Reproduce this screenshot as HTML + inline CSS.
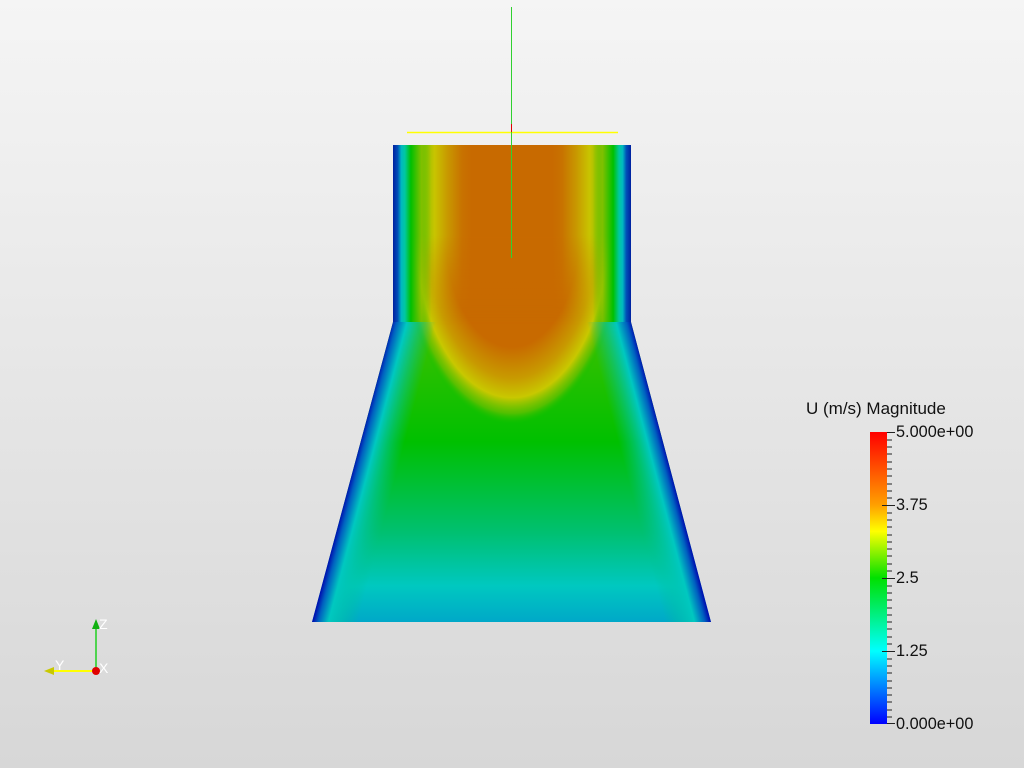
<!DOCTYPE html>
<html><head><style>
html,body{margin:0;padding:0;width:1024px;height:768px;overflow:hidden}
body{background:linear-gradient(#f5f5f5,#d7d7d7)}
svg{position:absolute;left:0;top:0}
text{font-family:"Liberation Sans","DejaVu Sans",sans-serif;fill:#111}
</style></head><body>
<svg width="1024" height="768" viewBox="0 0 1024 768">
<defs>
<clipPath id="shape"><polygon points="393,145 631,145 631,322 711,622 312,622 393,322"/></clipPath>
<linearGradient id="base" x1="0" y1="322" x2="0" y2="622" gradientUnits="userSpaceOnUse">
<stop offset="0" stop-color="#40c000"/><stop offset="0.4" stop-color="#00c000"/>
<stop offset="0.7" stop-color="#00c070"/><stop offset="0.88" stop-color="#00c8c0"/>
<stop offset="1" stop-color="#00a8c8"/></linearGradient>
<radialGradient id="core">
<stop offset="0" stop-color="#c86a00"/><stop offset="0.6" stop-color="#c86a00"/>
<stop offset="0.76" stop-color="#c89a00"/><stop offset="0.86" stop-color="#c8c800"/>
<stop offset="0.94" stop-color="#80c000" stop-opacity="0.6"/><stop offset="1" stop-color="#00c000" stop-opacity="0"/></radialGradient>
<linearGradient id="full" x1="393" y1="0" x2="631" y2="0" gradientUnits="userSpaceOnUse">
<stop offset="0" stop-color="#0020a0"/><stop offset="0.02" stop-color="#0050b8"/>
<stop offset="0.035" stop-color="#00b8c0"/><stop offset="0.05" stop-color="#00c8a0"/>
<stop offset="0.075" stop-color="#00c000"/><stop offset="0.12" stop-color="#80c000"/>
<stop offset="0.175" stop-color="#c8c400"/><stop offset="0.23" stop-color="#c89800"/>
<stop offset="0.29" stop-color="#c87200"/><stop offset="0.33" stop-color="#c86a00"/>
<stop offset="0.67" stop-color="#c86a00"/><stop offset="0.71" stop-color="#c87200"/>
<stop offset="0.77" stop-color="#c89800"/><stop offset="0.825" stop-color="#c8c400"/>
<stop offset="0.88" stop-color="#80c000"/><stop offset="0.925" stop-color="#00c000"/>
<stop offset="0.95" stop-color="#00c8a0"/><stop offset="0.965" stop-color="#00b8c0"/>
<stop offset="0.98" stop-color="#0050b8"/><stop offset="1" stop-color="#0020a0"/></linearGradient>
<linearGradient id="edges" x1="393" y1="0" x2="631" y2="0" gradientUnits="userSpaceOnUse">
<stop offset="0" stop-color="#0020a0"/><stop offset="0.02" stop-color="#0050b8"/>
<stop offset="0.035" stop-color="#00b8c0"/><stop offset="0.05" stop-color="#00c8a0"/>
<stop offset="0.075" stop-color="#00c000"/><stop offset="0.12" stop-color="#80c000" stop-opacity="0.5"/>
<stop offset="0.16" stop-color="#00c000" stop-opacity="0"/>
<stop offset="0.84" stop-color="#00c000" stop-opacity="0"/>
<stop offset="0.88" stop-color="#80c000" stop-opacity="0.5"/><stop offset="0.925" stop-color="#00c000"/>
<stop offset="0.95" stop-color="#00c8a0"/><stop offset="0.965" stop-color="#00b8c0"/>
<stop offset="0.98" stop-color="#0050b8"/><stop offset="1" stop-color="#0020a0"/></linearGradient>
<linearGradient id="fade" x1="0" y1="235" x2="0" y2="325" gradientUnits="userSpaceOnUse">
<stop offset="0" stop-color="#fff"/><stop offset="1" stop-color="#fff" stop-opacity="0"/></linearGradient>
<mask id="fm"><rect x="380" y="140" width="260" height="200" fill="url(#fade)"/></mask>
<linearGradient id="le" x1="352" y1="472" x2="394" y2="483" gradientUnits="userSpaceOnUse">
<stop offset="0" stop-color="#0010b0"/><stop offset="0.12" stop-color="#0060c0"/>
<stop offset="0.35" stop-color="#00c8c0"/><stop offset="1" stop-color="#00c090" stop-opacity="0"/></linearGradient>
<linearGradient id="re" x1="671" y1="472" x2="629" y2="483" gradientUnits="userSpaceOnUse">
<stop offset="0" stop-color="#0010b0"/><stop offset="0.12" stop-color="#0060c0"/>
<stop offset="0.35" stop-color="#00c8c0"/><stop offset="1" stop-color="#00c090" stop-opacity="0"/></linearGradient>
<linearGradient id="cb" x1="0" y1="432" x2="0" y2="724" gradientUnits="userSpaceOnUse">
<stop offset="0" stop-color="#ff0000"/><stop offset="0.25" stop-color="#ffa000"/>
<stop offset="0.34" stop-color="#ffff00"/><stop offset="0.5" stop-color="#00e000"/>
<stop offset="0.75" stop-color="#00ffff"/><stop offset="1" stop-color="#0000ff"/></linearGradient>
</defs>
<g clip-path="url(#shape)">
<rect x="300" y="140" width="420" height="490" fill="url(#base)"/>
<ellipse cx="512" cy="230" rx="112" ry="195" fill="url(#core)"/>
<rect x="300" y="322" width="420" height="310" fill="url(#le)"/>
<rect x="300" y="322" width="420" height="310" fill="url(#re)"/>
<rect x="393" y="145" width="238" height="180" fill="url(#full)" mask="url(#fm)"/>
<rect x="393" y="145" width="238" height="177" fill="url(#edges)"/>
</g>
<line x1="407" y1="132.5" x2="618" y2="132.5" stroke="#ffff00" stroke-width="1.5"/>
<line x1="511.5" y1="7" x2="511.5" y2="258" stroke="#30d030" stroke-width="1"/>
<line x1="511.5" y1="124" x2="511.5" y2="132" stroke="#e00000" stroke-width="1"/>
<line x1="96" y1="670" x2="96" y2="626" stroke="#20d020" stroke-width="1.5"/>
<polygon points="96,619 92,629 100,629" fill="#10b010"/>
<text x="99" y="629" font-size="14" style="fill:#fff">Z</text>
<line x1="96" y1="671" x2="52" y2="671" stroke="#ffff00" stroke-width="2"/>
<polygon points="44,671 54,667 54,675" fill="#c8c800"/>
<text x="55" y="670" font-size="14" style="fill:#fff">Y</text>
<circle cx="96" cy="671" r="4" fill="#e00000"/>
<text x="99" y="673" font-size="14" style="fill:#fff">X</text>
<text x="806" y="414" font-size="17">U (m/s) Magnitude</text>
<rect x="870" y="432" width="17" height="292" fill="url(#cb)"/>
<g stroke="#222" stroke-width="1">
<path d="M887 432.5h8M887 440h5M887 447h5M887 454h5M887 462h5M887 469h5M887 476h5M887 484h5M887 491h5M887 498h5M887 505.5h8M887 513h5M887 520h5M887 527h5M887 535h5M887 542h5M887 549h5M887 556h5M887 564h5M887 571h5M887 578.5h8M887 586h5M887 593h5M887 600h5M887 608h5M887 615h5M887 622h5M887 629h5M887 637h5M887 644h5M887 651.5h8M887 659h5M887 666h5M887 673h5M887 681h5M887 688h5M887 695h5M887 702h5M887 710h5M887 717h5M887 723.5h8"/>
<path d="M882 505.5h5M882 578.5h5M882 651.5h5"/>
</g>
<g font-size="16.3">
<text x="896" y="437">5.000e+00</text>
<text x="896" y="510">3.75</text>
<text x="896" y="583">2.5</text>
<text x="896" y="656">1.25</text>
<text x="896" y="729">0.000e+00</text>
</g>
</svg>
</body></html>
